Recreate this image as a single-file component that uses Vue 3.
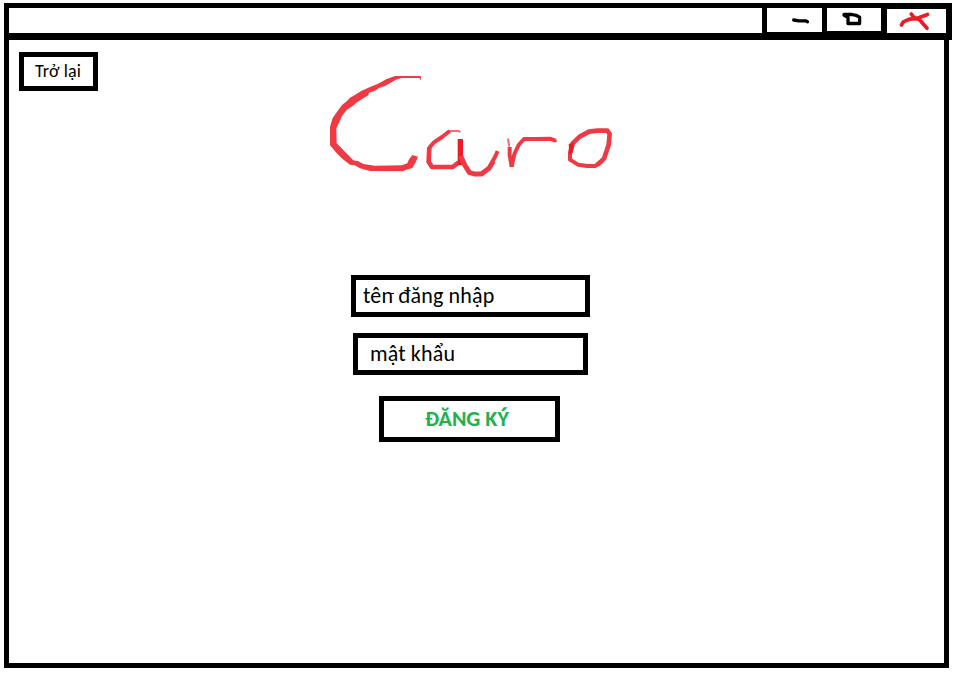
<script setup>
import { ref } from 'vue'

const username = ref('tên đăng nhập')
const password = ref('mật khẩu')
</script>

<template>
  <div class="window">
    <header class="titlebar">
      <div class="caption"></div>
      <button class="control minimize" aria-label="Minimize">
        <svg viewBox="0 0 55 24" width="55" height="24">
          <path class="ink" d="M26.7 12 L32 12.9 H39 L40.5 13.7" />
        </svg>
      </button>
      <button class="control maximize" aria-label="Maximize">
        <svg viewBox="0 0 54 23" width="54" height="23">
          <path class="ink" d="M17 6.5 H25 L29 7.3 L32.6 9.3 V15.5 H21 V9.5 L17 7" />
        </svg>
      </button>
      <button class="control close" aria-label="Close">
        <svg viewBox="0 0 59 24" width="59" height="24">
          <path class="ink red" d="M14.4 16 L16.3 12.9 L22.3 10.2 L29.7 9.6 L40.5 5.5 M24.3 5 L26.3 7.9 L33 11.2 L40 19.3" />
        </svg>
      </button>
    </header>
    <main class="body">
      <button class="box back"><span>Trở lại</span></button>
      <svg class="logo" viewBox="0 0 900 360" width="300" height="120" role="img" aria-label="Caro">
        <path class="fill" d="M302 33 H225 L200 42 L174 56 L150 66 L122 79 L106 89 L90 98 L80 109 L66 120 L48 145 L38 159 L30 185 V241 L53 268 L68 282 L90 299 L104 301 L120 310 L150 318 L248 319 L264 313 L277 309 L287 292 L294 275 L277 270 L266 285 L262 295 L245 301 L165 302 L130 297 L115 289 L100 286 L75 260 L50 235 L49 190 L61 165 L66 152 L81 134 L101 121 L109 113 L125 103 L145 91 L147 83 L165 77 L177 69 L195 63 L228 44 L245 39 H298 L304 47 Z" />
        <path class="stroke thin" d="M421 201 L415 198 H388 L366 216" />
        <path class="stroke" d="M389 198 L366 216 L342 232 L328 248" />
        <path class="stroke bowl" d="M328 246 L326 290 L336 306 H398 L416 292" />
        <path class="fill solid" d="M413 222 H429 V300 H413 Z" />
        <path class="stroke tail" d="M422 272 L434 300 L448 322 L463 327 H484 L496 318 L507 310 L520 288" />
        <path class="stroke" d="M517 290 L525 276 L533 258" />
        <path class="stroke thin" d="M564 221 L568 245" />
        <path class="stroke" d="M569 246 V270 L575 306" />
        <path class="stroke" d="M575 305 L583 267 L596 240 L612 222 H645 L690 221 L704 226 V232" />
        <path class="stroke bowl" d="M751 262 L758 235 L779 215 L807 200 L833 197 L862 197 L869 207 L866 239 L852 281 L832 300" />
        <path class="stroke" d="M750 260 V284 L774 299 L802 303 H826 L840 292" />
        <path class="fill solid" d="M746 237 L763 233 L757 265 L748 269 Z" />
      </svg>
      <form class="form" @submit.prevent>
        <label class="box field username">
          <span>{{ username }}</span>
          <i class="dash"></i>
        </label>
        <label class="box field password"><span>{{ password }}</span></label>
        <button class="box submit"><span>ĐĂNG KÝ</span></button>
      </form>
    </main>
  </div>
</template>

<style>
body {
  background: #fff;
}
</style>

<style scoped>
.window {
  box-sizing: border-box;
  width: 958px;
  height: 679px;
  padding: 3px 6px 11px 4px;
  overflow: hidden;
  background: #fff;
  color: #000;
  font-family: Carlito, Lato, 'Noto Sans', sans-serif;
}
.titlebar {
  box-sizing: border-box;
  display: flex;
  align-items: flex-start;
  height: 37px;
  padding: 5px 6px 0 5px;
  background: #000;
}
.caption {
  width: 753px;
  height: 25px;
  background: #fff;
}
.control {
  display: block;
  padding: 0;
  border: 0;
  background: #fff;
}
.control svg {
  display: block;
}
.minimize {
  margin-left: 5px;
}
.maximize {
  margin-left: 5px;
}
.close {
  margin: 1px 0 0 6px;
}
.ink {
  fill: none;
  stroke: #000;
  stroke-width: 3.3;
  stroke-linecap: round;
  stroke-linejoin: round;
}
.red {
  stroke: #ed1c24;
  stroke-width: 3.7;
}
.body {
  box-sizing: border-box;
  width: 945px;
  height: 628px;
  border: 5px solid #000;
  border-top: 0;
  padding: 12px 0 0 10px;
}
.box {
  box-sizing: border-box;
  display: flex;
  align-items: center;
  border: 5px solid #000;
  padding: 0;
  background: #fff;
  color: #000;
  font-family: inherit;
  white-space: nowrap;
}
.back {
  width: 79px;
  height: 39px;
  padding: 0 0 1px 11px;
  font-size: 18px;
  line-height: 20px;
  letter-spacing: 0.15px;
}
.logo {
  display: block;
  margin: -26px 0 0 301px;
}
.fill {
  fill: #f03a43;
}
.solid {
  fill: #ed1c24;
}
.stroke {
  fill: none;
  stroke: #f03a43;
  stroke-width: 12;
  stroke-linejoin: round;
}
.thin {
  stroke-width: 6;
  opacity: 0.75;
}
.bowl {
  stroke-width: 14;
}
.tail {
  stroke-width: 15;
}
.form {
  display: flex;
  flex-direction: column;
  margin: 90px 0 0 332px;
}
.field {
  position: relative;
  height: 42px;
  font-size: 22px;
  line-height: 24px;
  letter-spacing: 0.15px;
}
.username {
  width: 239px;
  padding: 0 0 1px 7px;
}
.password {
  width: 235px;
  margin: 16px 0 0 2px;
  padding-left: 12px;
}
.dash {
  position: absolute;
  top: 13px;
  left: 34px;
  width: 4px;
  height: 1px;
  background: #000;
}
.submit {
  width: 181px;
  height: 46px;
  margin: 21px 0 0 28px;
  padding-left: 41px;
  color: #22b14c;
  font-size: 22px;
  font-weight: 700;
  line-height: 24px;
}
</style>
